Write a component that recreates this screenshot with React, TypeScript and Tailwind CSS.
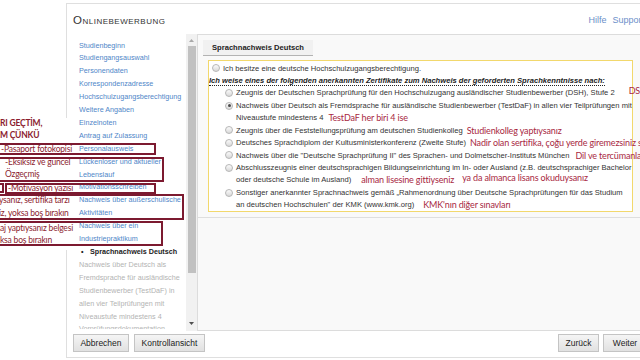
import type { ReactNode } from "react";

const navItems: { lines: string[]; kind?: "active" | "muted" }[] = [
  { lines: ["Studienbeginn"] },
  { lines: ["Studiengangsauswahl"] },
  { lines: ["Personendaten"] },
  { lines: ["Korrespondenzadresse"] },
  { lines: ["Hochschulzugangsberechtigung"] },
  { lines: ["Weitere Angaben"] },
  { lines: ["Einzelnoten"] },
  { lines: ["Antrag auf Zulassung"] },
  { lines: ["Personalausweis"] },
  { lines: ["Lückenloser und aktueller", "Lebenslauf"] },
  { lines: ["Motivationsschreiben"] },
  { lines: ["Nachweis über außerschulische", "Aktivitäten"] },
  { lines: ["Nachweis über ein", "Industriepraktikum"] },
  { lines: ["Sprachnachweis Deutsch"], kind: "active" },
  {
    lines: [
      "Nachweis über Deutsch als",
      "Fremdsprache für ausländische",
      "Studienbewerber (TestDaF) in",
      "allen vier Teilprüfungen mit",
      "Niveaustufe mindestens 4",
    ],
    kind: "muted",
  },
  { lines: ["Vorprüfungsdokumentation"], kind: "muted" },
];

function Radio({ checked }: { checked?: boolean }) {
  return (
    <span className="mt-[2.2px] flex h-[8px] w-[8px] shrink-0 items-center justify-center rounded-full border border-[#b7b7b7] bg-gradient-to-b from-[#fbfbfb] to-[#d9d9d9]">
      {checked && <span className="h-[3px] w-[3px] rounded-full bg-[#4a4a4a]" />}
    </span>
  );
}

function Line({ children }: { children: ReactNode }) {
  return <div className="flex h-[12.45px] items-center whitespace-nowrap">{children}</div>;
}

function Note({ children, className = "" }: { children: ReactNode; className?: string }) {
  return (
    <span className={`font-['Lato',sans-serif] text-[9px] tracking-[-0.15px] text-[#a8283f] ${className}`}>
      {children}
    </span>
  );
}

function Option({ checked, children }: { checked?: boolean; children: ReactNode }) {
  return (
    <div className="flex gap-[3px] pl-[16px]">
      <Radio checked={checked} />
      <div>{children}</div>
    </div>
  );
}

function Button({ label, width }: { label: string; width: string }) {
  return (
    <button
      className={`h-[18px] ${width} border border-[#c4c4c4] bg-gradient-to-b from-[#f5f5f5] to-[#e1e1e1] text-[8.5px] text-[#222]`}
    >
      {label}
    </button>
  );
}

export default function App() {
  return (
    <div className="relative h-[360px] w-[640px] overflow-hidden bg-white font-['Liberation_Sans',Arial,sans-serif] text-[#333]">
      {/* application card */}
      <div className="ml-[66px] mt-[3px] flex h-[355px] w-[620px] flex-col border border-[#dfdfdf]">
        <header className="flex h-[30px] shrink-0 items-center justify-between pl-[6px] pr-[41px] pt-[4px]">
          <h1 className="text-[11.5px] tracking-[0.5px] text-[#333] [font-variant:small-caps]">Onlinebewerbung</h1>
          <div className="flex gap-[6px] text-[9px] text-[#6b8fc9]">
            <span>Hilfe</span>
            <span>Support</span>
          </div>
        </header>

        <div className="flex h-[297px] shrink-0">
          {/* step navigation */}
          <div className="h-[295px] w-[119px] shrink-0 overflow-hidden pl-[12px] pt-[5.5px] text-[7.2px] leading-[12.9px]">
            {navItems.map((item, i) =>
              item.kind === "active" ? (
                <div key={i} className="flex whitespace-nowrap font-bold text-[#222]">
                  <span className="ml-[2px] w-[9px]">•</span>
                  <span>{item.lines[0]}</span>
                </div>
              ) : (
                <div
                  key={i}
                  className={`whitespace-nowrap ${item.kind === "muted" ? "text-[#b3b3b3]" : "text-[#4f86c8]"}`}
                >
                  {item.lines.map((l) => (
                    <div key={l}>{l}</div>
                  ))}
                </div>
              )
            )}
          </div>

          {/* scrollbar */}
          <div className="flex w-[11px] shrink-0 flex-col items-center bg-[#f1f1f1]">
            <div className="flex h-[12px] items-center justify-center">
              <svg width="5" height="3" viewBox="0 0 5 3">
                <path d="M0 3 L2.5 0 L5 3 Z" fill="#a9a9a9" />
              </svg>
            </div>
            <div className="h-[227px] w-[8px] bg-[#c1c1c1]" />
            <div className="flex-1" />
            <div className="mb-[2px] flex h-[12px] items-center justify-center">
              <svg width="5" height="3" viewBox="0 0 5 3">
                <path d="M0 0 L5 0 L2.5 3 Z" fill="#505050" />
              </svg>
            </div>
          </div>

          {/* content panel */}
          <div className="flex-1 border border-[#dcdcdc] bg-[#f9f9f9]">
            <div className="border-b border-[#dedede] pb-[5px] pl-[5px] pt-[5px]">
              <div className="flex h-[16px] w-[110px] items-center border-b border-[#b3b3b3] bg-[#f1f1f1] pl-[9px] text-[7.6px] font-bold text-[#222]">
                Sprachnachweis Deutsch
              </div>

              <div className="ml-[5px] mt-[4px] w-[425px] border border-[#f2d86c] bg-white pt-[1px] text-[7.6px]">
                <div className="flex gap-[3px] pl-[3px]">
                  <Radio />
                  <Line>Ich besitze eine deutsche Hochschulzugangsberechtigung.</Line>
                </div>
                <Line>
                  <span className="border-b border-dotted border-[#222] font-bold italic leading-[9px] text-[#222]">
                    Ich weise eines der folgenden anerkannten Zertifikate zum Nachweis der geforderten Sprachkenntnisse nach:
                  </span>
                </Line>
                <Option>
                  <Line>
                    Zeugnis der Deutschen Sprachprüfung für den Hochschulzugang ausländischer Studienbewerber (DSH), Stufe 2
                    <Note className="ml-[14px] -translate-y-[2px]">DSH</Note>
                  </Line>
                </Option>
                <Option checked>
                  <Line>
                    Nachweis über Deutsch als Fremdsprache für ausländische Studienbewerber (TestDaF) in allen vier Teilprüfungen mit
                  </Line>
                  <Line>
                    Niveaustufe mindestens 4<Note className="ml-[5px]">TestDaF her biri 4 ise</Note>
                  </Line>
                </Option>
                <Option>
                  <Line>
                    Zeugnis über die Feststellungsprüfung am deutschen Studienkolleg
                    <Note className="ml-[4px]">Studienkolleg yaptıysanız</Note>
                  </Line>
                </Option>
                <Option>
                  <Line>
                    Deutsches Sprachdiplom der Kultusministerkonferenz (Zweite Stufe)
                    <Note className="ml-[4px]">Nadir olan sertifika, çoğu yerde giremezsiniz sınavına</Note>
                  </Line>
                </Option>
                <Option>
                  <Line>
                    Nachweis über die "Deutsche Sprachprüfung II" des Sprachen- und Dolmetscher-Instituts München
                    <Note className="ml-[6px]">Dil ve tercümanlar</Note>
                  </Line>
                </Option>
                <Option>
                  <Line>
                    Abschlusszeugnis einer deutschsprachigen Bildungseinrichtung im In- oder Ausland (z.B. deutschsprachiger Bachelor
                  </Line>
                  <Line>
                    oder deutsche Schule im Ausland)
                    <Note className="ml-[10px]">alman lisesine gittiyseniz</Note>
                    <Note className="ml-[8px] -translate-y-[2px]">ya da almanca lisans okuduysanız</Note>
                  </Line>
                </Option>
                <Option>
                  <Line>
                    Sonstiger anerkannter Sprachnachweis gemäß „Rahmenordnung über Deutsche Sprachprüfungen für das Studium
                  </Line>
                  <Line>
                    an deutschen Hochschulen" der KMK (www.kmk.org)
                    <Note className="ml-[9px]">KMK'nın diğer sınavları</Note>
                  </Line>
                </Option>
              </div>
            </div>
          </div>
        </div>

        <footer className="flex flex-1 items-start justify-between pl-[6px] pr-[38px] pt-[3px]">
          <div className="flex gap-[5px]">
            <Button label="Abbrechen" width="w-[56px]" />
            <Button label="Kontrollansicht" width="w-[71px]" />
          </div>
          <div className="flex gap-[4px]">
            <Button label="Zurück" width="w-[41px]" />
            <Button label="Weiter" width="w-[44px]" />
          </div>
        </footer>
      </div>

      {/* annotation overlay on the left */}
      <div className="absolute left-0 top-[118px] h-[132px] w-[77px] bg-white" />
      <div className="absolute left-[-4px] top-[143px] h-[12px] w-[160px] border-2 border-[#7c1a30]" />
      <div className="absolute left-[-4px] top-[157px] h-[25px] w-[168px] border-2 border-[#7c1a30]" />
      <div className="absolute left-[-8px] top-[183px] h-[10px] w-[12px] border-2 border-[#7c1a30]" />
      <div className="absolute left-[5px] top-[183px] h-[11px] w-[151px] border-2 border-[#7c1a30]" />
      <div className="absolute left-[-4px] top-[194px] h-[26px] w-[188px] border-2 border-[#7c1a30]" />
      <div className="absolute left-[-4px] top-[221px] h-[25px] w-[167px] border-2 border-[#7c1a30]" />

      <div className="absolute left-0 top-[118px] whitespace-nowrap font-['Lato',sans-serif] text-[8.5px] leading-[11.5px] tracking-[-0.2px] text-[#8c1d2f]">
        <div className="font-bold">RI GEÇTİM,</div>
        <div className="font-bold">M ÇÜNKÜ</div>
      </div>
      <div className="absolute left-[1px] top-[143px] font-['Lato',sans-serif] text-[8.5px] leading-[12px] tracking-[-0.2px] text-[#8c1d2f]">
        -Pasaport fotokopisi
      </div>
      <div className="absolute left-[5px] top-[156px] whitespace-nowrap font-['Lato',sans-serif] text-[8.5px] leading-[12px] tracking-[-0.2px] text-[#8c1d2f]">
        <div>-Eksiksiz ve güncel</div>
        <div>Özgeçmiş</div>
      </div>
      <div className="absolute left-[8px] top-[182px] font-['Lato',sans-serif] text-[8.5px] leading-[12px] tracking-[-0.2px] text-[#8c1d2f]">
        -Motivasyon yazısı
      </div>
      <div className="absolute left-[-1px] top-[194px] whitespace-nowrap font-['Lato',sans-serif] text-[8.5px] leading-[12.5px] tracking-[-0.2px] text-[#8c1d2f]">
        <div>ysanız, sertifika tarzı</div>
        <div>iz, yoksa boş bırakın</div>
      </div>
      <div className="absolute left-0 top-[223px] whitespace-nowrap font-['Lato',sans-serif] text-[8.5px] leading-[11.5px] tracking-[-0.2px] text-[#8c1d2f]">
        <div>aj yaptıysanız belgesi</div>
        <div>ksa boş bırakın</div>
      </div>
    </div>
  );
}
